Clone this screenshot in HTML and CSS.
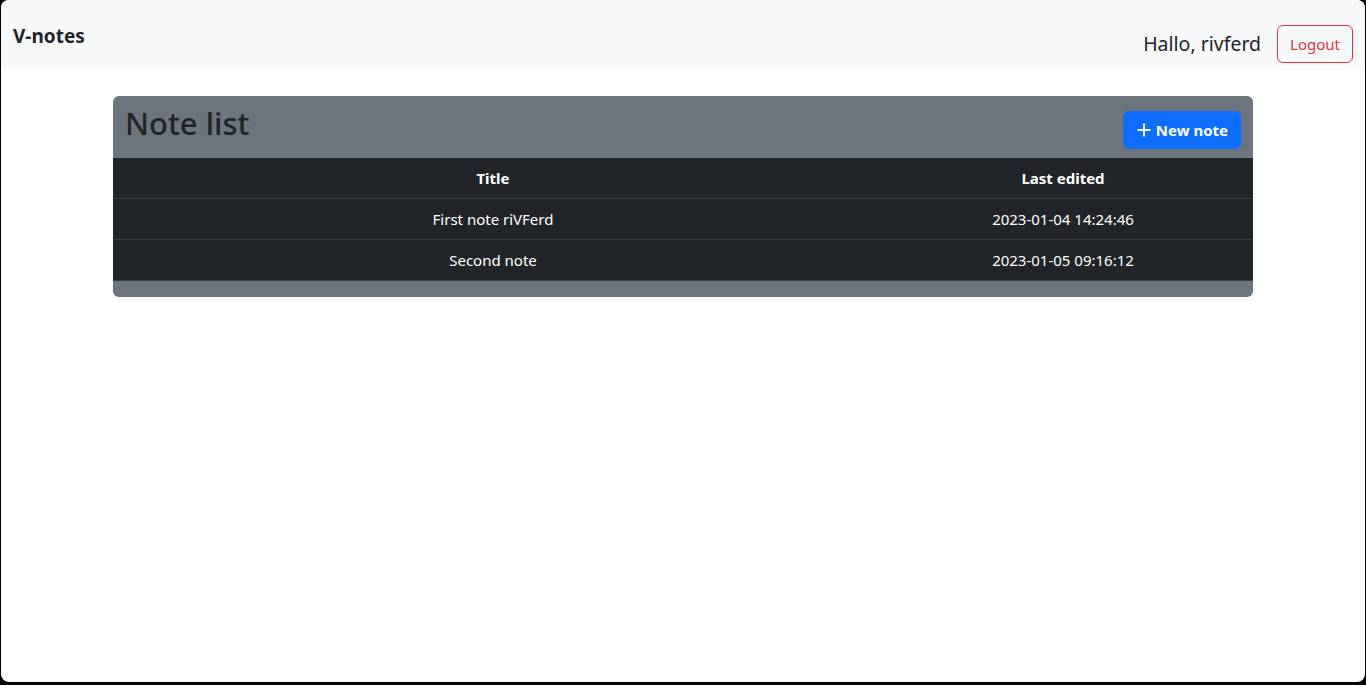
FILE: index.html
```html
<!DOCTYPE html>
<html lang="en">
<head>
<meta charset="utf-8">
<title>V-notes</title>
<link rel="stylesheet" href="styles.css">
</head>
<body>
<div class="window">
  <nav class="navbar">
    <a class="brand" href="#">V-notes</a>
    <div class="nav-right">
      <span class="greeting">Hallo, rivferd</span>
      <button class="btn-logout" type="button">Logout</button>
    </div>
  </nav>
  <main class="container">
    <div class="card-head">
      <h2 class="title">Note list</h2>
      <button class="btn-new" type="button">
        <svg width="16" height="16" viewBox="0 0 16 16" fill="none" stroke="#fff" stroke-width="2" aria-hidden="true"><path d="M8 1.5v13M1.5 8h13"/></svg>
        New note
      </button>
    </div>
    <table class="notes">
      <thead>
        <tr><th class="c-title">Title</th><th class="c-date">Last edited</th></tr>
      </thead>
      <tbody>
        <tr><td>First note riVFerd</td><td>2023-01-04 14:24:46</td></tr>
        <tr><td>Second note</td><td>2023-01-05 09:16:12</td></tr>
      </tbody>
    </table>
  </main>
</div>
</body>
</html>
```
FILE: styles.css
```css
* { box-sizing: border-box; }
html, body { margin: 0; padding: 0; }
body {
  background: #000;
  font-family: "Noto Sans", "Open Sans", sans-serif;
  color: #212529;
  font-size: 16px;
  line-height: 1.5;
}
.window {
  margin: 0 1px 3px 1px;
  height: 682px;
  background: #fff;
  border-radius: 8px;
  overflow: hidden;
}
.navbar {
  height: 70px;
  background: #f8f9fa;
  display: flex;
  align-items: center;
  justify-content: space-between;
  padding: 0 12px 0 12px;
}
.brand {
  font-size: 19px;
  font-weight: 700;
  color: #212529;
  text-decoration: none;
  margin-top: 2px;
}
.nav-right {
  display: flex;
  align-items: center;
  gap: 16px;
  margin-top: 17px;
}
.greeting { font-size: 19.5px; }
.btn-logout {
  font-family: inherit;
  font-size: 15px;
  font-weight: 400;
  color: #dc3545;
  background: transparent;
  border: 1px solid #dc3545;
  border-radius: 6px;
  height: 38px;
  padding: 0 12px;
}
.container {
  width: 1140px;
  margin: 26px auto 0;
  background: #6c757d;
  border-radius: 6px;
  padding-bottom: 16px;
  overflow: hidden;
}
.card-head {
  height: 62px;
  display: flex;
  align-items: flex-start;
  justify-content: space-between;
  padding: 0 12px;
}
.title {
  margin: 9px 0 0;
  font-size: 31px;
  font-weight: 500;
  line-height: 1.2;
  color: #212529;
}
.btn-new {
  margin-top: 15px;
  height: 38px;
  display: flex;
  align-items: center;
  gap: 4px;
  font-family: inherit;
  font-size: 15px;
  font-weight: 700;
  color: #fff;
  background: #0d6efd;
  border: 1px solid #0d6efd;
  border-radius: 6px;
  padding: 0 12px;
}
.notes {
  width: 100%;
  border-collapse: collapse;
  background: #212529;
  color: #fff;
}
.notes th, .notes td {
  text-align: center;
  padding: 8px;
  font-size: 15px;
  line-height: 24px;
  border-bottom: 1px solid #373b3e;
}
.notes th { font-weight: 700; }
.c-title { width: 760px; }
```
